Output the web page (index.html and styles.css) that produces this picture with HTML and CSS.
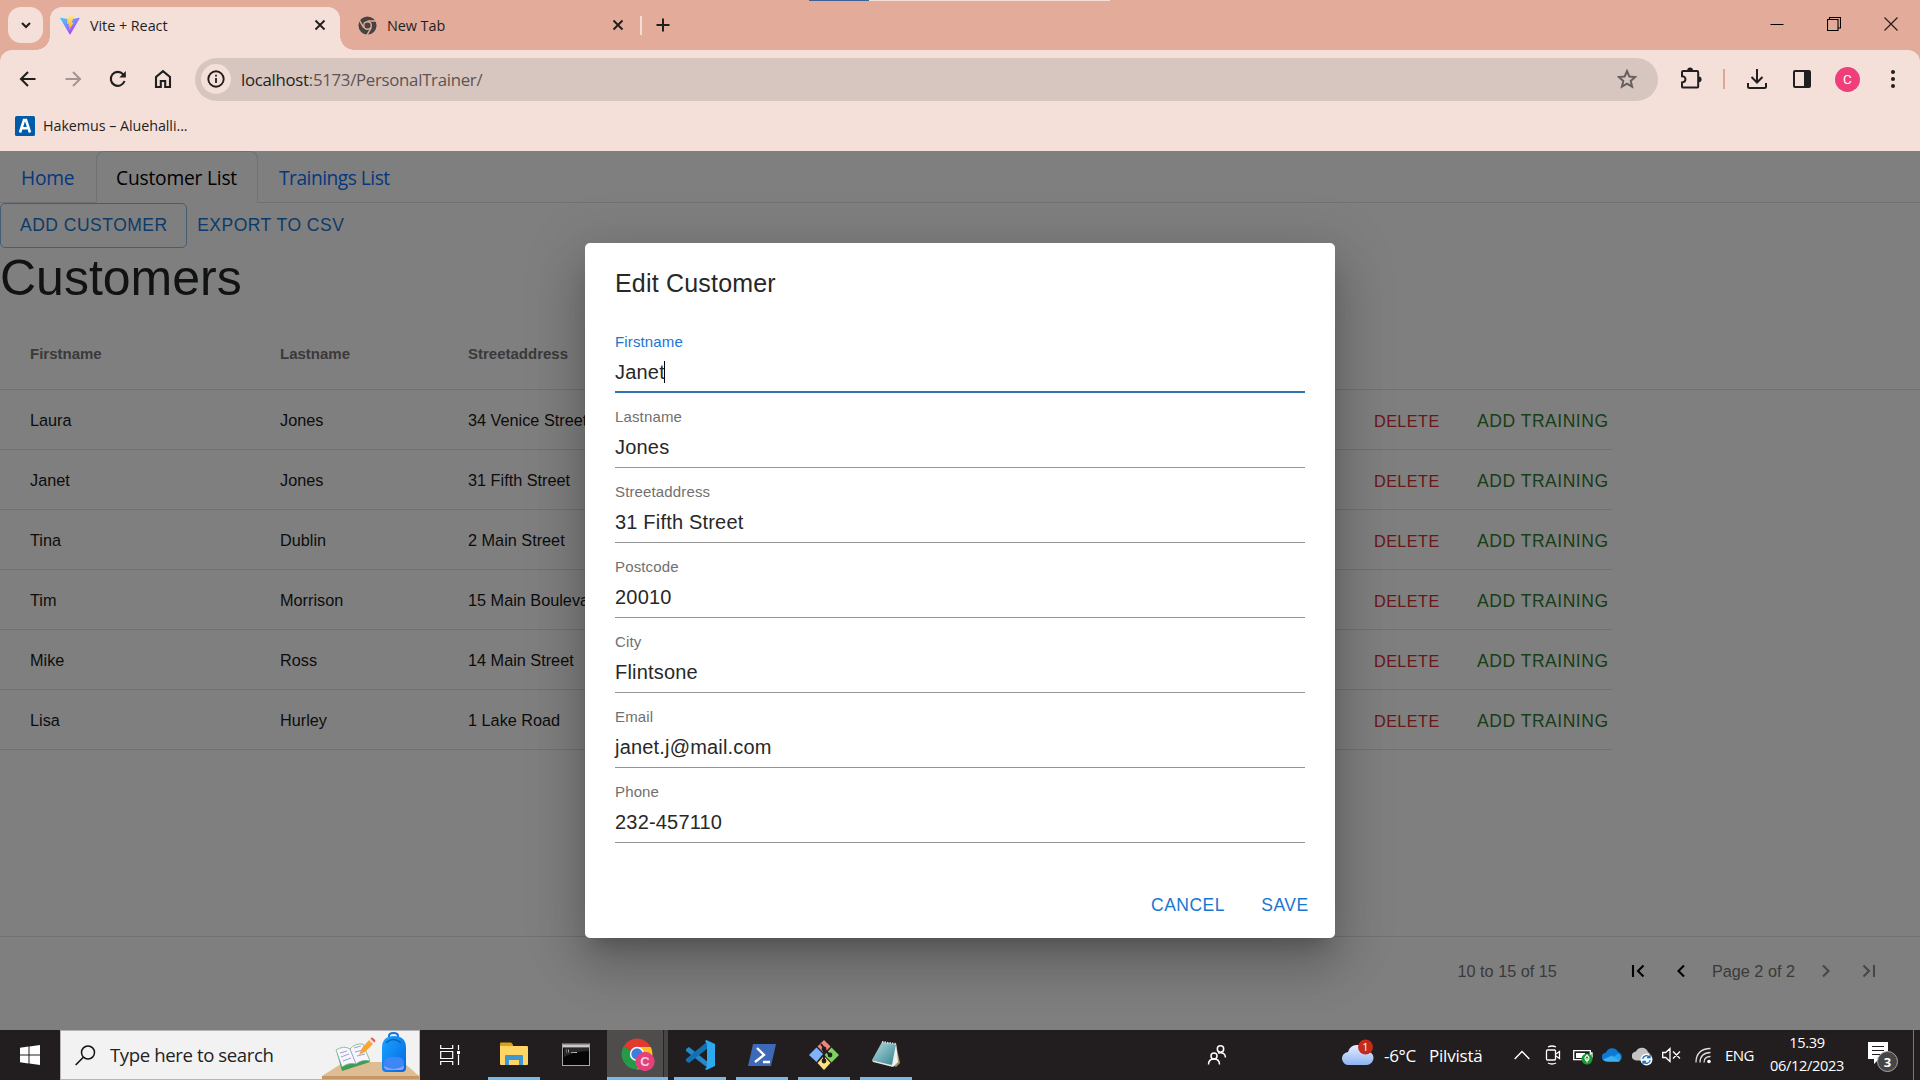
FILE: index.html
```html
<!DOCTYPE html>
<html lang="en">
<head>
<meta charset="utf-8">
<title>Vite + React</title>
<link rel="stylesheet" href="styles.css">
</head>
<body>
<div class="screen">
  <header class="browser">
    <div class="tabstrip">
      <div class="load-strip"><i></i></div>
      <button class="tab-search"><svg width="12" height="12" viewBox="0 0 12 12"><path d="M2 4l4 4 4-4" fill="none" stroke="#1f1f1f" stroke-width="2.1"/></svg></button>
      <div class="tab tab-active">
        <svg width="20" height="20" viewBox="0 0 32 32"><defs><linearGradient id="v1" x1="0" y1="0" x2=".7" y2="1"><stop offset="0" stop-color="#41d1ff"/><stop offset="1" stop-color="#bd34fe"/></linearGradient><linearGradient id="v2" x1="0" y1="0" x2="0" y2="1"><stop offset="0" stop-color="#ffea83"/><stop offset="1" stop-color="#ffa800"/></linearGradient></defs><path d="M31.300 5.700L16.700 30.800a.8.8 0 0 1-1.400 0L.4 5.700a.8.8 0 0 1 .9-1.200L16 7.100l14.500-2.600a.8.8 0 0 1 .8 1.200z" fill="url(#v1)"/><path d="M22.500 1L12 3.100l-.8 11.300 3.200-.7-.9 4.500 2-.6-1.500 7.200 8.200-13-3.400.6z" fill="url(#v2)"/></svg>
        <span class="tab-title">Vite + React</span>
        <svg class="x" width="12" height="12" viewBox="0 0 12 12"><path d="M1.500 1.500l9 9M10.500 1.500l-9 9" stroke="#1f1f1f" stroke-width="1.900"/></svg>
      </div>
      <div class="tab tab-idle">
        <svg width="19" height="19" viewBox="0 0 20 20"><circle cx="10" cy="10" r="9.500" fill="#474343"/><circle cx="10" cy="10" r="4.700" fill="#e3ab99"/><circle cx="10" cy="10" r="3.200" fill="#474343"/><path d="M10 5.300h9M6 12.300L1.500 4.500M14 12.300l-4.500 7.500" stroke="#e3ab99" stroke-width="1.500"/></svg>
        <span class="tab-title">New Tab</span>
        <svg class="x" width="12" height="12" viewBox="0 0 12 12"><path d="M1.500 1.500l9 9M10.500 1.500l-9 9" stroke="#1f1f1f" stroke-width="1.900"/></svg>
      </div>
      <i class="tab-sep"></i>
      <svg class="plus" width="14" height="14" viewBox="0 0 14 14"><path d="M7 .5v13M.5 7h13" stroke="#1f1f1f" stroke-width="2"/></svg>
      <div class="win-controls">
        <svg width="14" height="14" viewBox="0 0 14 14"><path d="M.5 7.500h13" stroke="#000" stroke-width="1"/></svg>
        <svg width="14" height="14" viewBox="0 0 14 14"><path d="M.5 2.500h10.500v11H.5zM2.500 2.500v-2h11v10.500h-2" fill="none" stroke="#000" stroke-width="1.100"/></svg>
        <svg width="14" height="14" viewBox="0 0 14 14"><path d="M.5.5l13 13M13.500.5l-13 13" stroke="#2b1a16" stroke-width="1.200"/></svg>
      </div>
    </div>
    <div class="toolbar">
      <div class="nav-icons">
        <svg width="20" height="20" viewBox="0 0 20 20"><path d="M17.500 10H3.500M10 3l-7 7 7 7" fill="none" stroke="#1f1f1f" stroke-width="2.100"/></svg>
        <svg width="20" height="20" viewBox="0 0 20 20"><path d="M2.500 10h14M10 3l7 7-7 7" fill="none" stroke="#a39692" stroke-width="2.100"/></svg>
        <svg width="20" height="20" viewBox="0 0 20 20"><path d="M16.500 12a7 7 0 1 1-1.300-6.600L17 7.300" fill="none" stroke="#1f1f1f" stroke-width="2.100"/><path d="M17.800 2v6.500h-6.500z" fill="#1f1f1f"/></svg>
        <svg width="20" height="20" viewBox="0 0 20 20"><path d="M3 18V8l7-5.800L17 8v10h-4.800v-6H7.800v6z" fill="none" stroke="#1f1f1f" stroke-width="2.100"/></svg>
      </div>
      <div class="omnibox">
        <span class="info"><svg width="18" height="18" viewBox="0 0 18 18"><circle cx="9" cy="9" r="7.700" fill="none" stroke="#1f1f1f" stroke-width="1.900"/><path d="M9 8v5M9 4.800v1.800" stroke="#1f1f1f" stroke-width="1.800"/></svg></span>
        <span class="url"><b>localhost</b>:5173/PersonalTrainer/</span>
        <svg class="star" width="20" height="20" viewBox="0 0 20 20"><path d="M10 2l2.300 5.500 6 .5-4.600 3.900 1.400 5.800L10 14.600l-5.100 3.100 1.400-5.800L1.700 8l6-.5z" fill="none" stroke="#66605e" stroke-width="2"/></svg>
      </div>
      <div class="tools">
        <svg class="t-ext" width="22" height="22" viewBox="0 0 22 22"><path d="M2 5.200q0-1.200 1.200-1.200H17q1.200 0 1.200 1.200v14.200q0 1.200-1.200 1.200H3.200Q2 20.600 2 19.400v-4c4.600 0 4.600-6.200 0-6.200z" fill="none" stroke="#1f1f1f" stroke-width="2"/><path d="M7.200 3.500a2.900 2.900 0 0 1 5.800 0zM18.700 9.400a2.900 2.900 0 0 1 0 5.800z" fill="#1f1f1f"/></svg>
        <i class="t-sep"></i>
        <svg width="22" height="22" viewBox="0 0 22 22"><path d="M11 1v13M5.500 9l5.500 5.500L16.500 9M2 15v3.500q0 1.500 1.500 1.500h15q1.500 0 1.500-1.500V15" fill="none" stroke="#1f1f1f" stroke-width="2"/></svg>
        <svg width="20" height="20" viewBox="0 0 20 20"><rect x="2" y="2" width="16" height="16" rx="1" fill="none" stroke="#1f1f1f" stroke-width="2"/><path d="M12 2h6v16h-6z" fill="#1f1f1f"/></svg>
        <span class="avatar">C</span>
        <svg width="20" height="20" viewBox="0 0 20 20"><g fill="#1f1f1f"><circle cx="10" cy="3" r="2"/><circle cx="10" cy="10" r="2"/><circle cx="10" cy="17" r="2"/></g></svg>
      </div>
    </div>
    <div class="bookmarks">
      <svg width="20" height="20" viewBox="0 0 20 20"><rect width="20" height="20" rx="1.500" fill="#005ba8"/><path d="M5 16.500L9 4h2l4 12.500M6.300 12.300h7.400" fill="none" stroke="#fff" stroke-width="2.600"/></svg>
      <span>Hakemus – Aluehalli...</span>
    </div>
  </header>

  <main class="page">
    <nav class="nav-tabs"><a>Home</a><a class="active">Customer List</a><a class="last">Trainings List</a></nav>
    <div class="actions"><button class="btn outlined">ADD CUSTOMER</button><button class="btn">EXPORT TO CSV</button></div>
    <h1>Customers</h1>
    <section class="grid">
      <div class="row head"><span>Firstname</span><span>Lastname</span><span>Streetaddress</span></div>
      <div class="row"><span>Laura</span><span>Jones</span><span>34 Venice Street</span><span class="del">DELETE</span><span class="add">ADD TRAINING</span></div>
      <div class="row"><span>Janet</span><span>Jones</span><span>31 Fifth Street</span><span class="del">DELETE</span><span class="add">ADD TRAINING</span></div>
      <div class="row"><span>Tina</span><span>Dublin</span><span>2 Main Street</span><span class="del">DELETE</span><span class="add">ADD TRAINING</span></div>
      <div class="row"><span>Tim</span><span>Morrison</span><span>15 Main Boulevard</span><span class="del">DELETE</span><span class="add">ADD TRAINING</span></div>
      <div class="row"><span>Mike</span><span>Ross</span><span>14 Main Street</span><span class="del">DELETE</span><span class="add">ADD TRAINING</span></div>
      <div class="row"><span>Lisa</span><span>Hurley</span><span>1 Lake Road</span><span class="del">DELETE</span><span class="add">ADD TRAINING</span></div>
    </section>
    <footer class="pager">
      <span class="summary">10 to 15 of 15</span>
      <svg class="p-first" width="14" height="14" viewBox="0 0 14 14"><path d="M2 1v12M12.500 1.500L7 7l5.500 5.500" fill="none" stroke="#000" stroke-width="2.100"/></svg>
      <svg class="p-prev" width="14" height="14" viewBox="0 0 14 14"><path d="M10 1.500L4.500 7l5.500 5.500" fill="none" stroke="#000" stroke-width="2.100"/></svg>
      <span class="page-no">Page 2 of 2</span>
      <svg class="p-next" width="14" height="14" viewBox="0 0 14 14"><path d="M4 1.500L9.500 7 4 12.500" fill="none" stroke="#8c8c8c" stroke-width="2.100"/></svg>
      <svg class="p-last" width="14" height="14" viewBox="0 0 14 14"><path d="M12 1v12M1.500 1.500L7 7l-5.500 5.500" fill="none" stroke="#8c8c8c" stroke-width="2.100"/></svg>
    </footer>
    <div class="backdrop">
      <form class="dialog">
        <h2>Edit Customer</h2>
        <div class="fields">
          <div class="field focused"><label>Firstname</label><p>Janet</p></div>
          <div class="field"><label>Lastname</label><p>Jones</p></div>
          <div class="field"><label>Streetaddress</label><p>31 Fifth Street</p></div>
          <div class="field"><label>Postcode</label><p>20010</p></div>
          <div class="field"><label>City</label><p>Flintsone</p></div>
          <div class="field"><label>Email</label><p>janet.j@mail.com</p></div>
          <div class="field"><label>Phone</label><p>232-457110</p></div>
        </div>
        <div class="dialog-actions"><button type="button" class="btn">CANCEL</button><button type="button" class="btn">SAVE</button></div>
      </form>
    </div>
  </main>

  <footer class="taskbar">
    <div class="start"><svg width="20" height="20" viewBox="0 0 20 20"><path d="M0 2.800L8.500 1.600v7.900H0zM9.500 1.500L20 0v9.500H9.500zM0 10.500h8.500v7.900L0 17.200zM9.500 10.500H20V20L9.500 18.500z" fill="#fff"/></svg></div>
    <div class="search">
      <svg width="21" height="21" viewBox="0 0 21 21"><circle cx="13" cy="7.500" r="6.500" fill="none" stroke="#111" stroke-width="1.500"/><path d="M8.300 12.200L.7 20" stroke="#111" stroke-width="1.600"/></svg>
      <span>Type here to search</span>
      <svg class="art" width="97" height="48" viewBox="0 0 97 48"><defs><linearGradient id="bp" x1="0" y1="0" x2="1" y2="1"><stop offset="0" stop-color="#19a5ff"/><stop offset="1" stop-color="#0567e0"/></linearGradient></defs><path d="M0 45l22-14h59l16 14z" fill="#dfbd94"/><path d="M0 45h97v3H0z" fill="#c69763"/><path d="M15 22l5 18 28-9-3-4z" fill="#3f9b56"/><path d="M14 19q8-5 14-1 5-6 13-5l7 17q-8-2-14 3-7-2-14 3z" fill="#f8f5ff" stroke="#5fae70" stroke-width=".7"/><path d="M28 18l6 15M18 22l7-2M19 26l8-3M21 30l8-3M32 17l7-2M33 21l8-2M35 25l8-2" stroke="#9da0c8" stroke-width="1"/><path d="M37 24l3-7 7-8 4 4-8 8z" fill="#f7a634"/><path d="M47 9l4 4 1.500-1.500-4-4z" fill="#dce5ed"/><path d="M48.500 7.500l4 4q2-2-1-4-2-2-3 0z" fill="#ef5350"/><path d="M67 7V5q0-3 4.500-3T76 5v3" fill="none" stroke="#1475df" stroke-width="2"/><path d="M60 17Q60 5 72 5T84 17v20q0 4-4 4H64q-4 0-4-4z" fill="url(#bp)"/><path d="M64 12q7-7 15 0" fill="none" stroke="#0761bd" stroke-width="1.300"/><path d="M62 32q0-6 7-6h6q7 0 7 6v4q-1 3-4 3H66q-4 0-4-3z" fill="#3c86f7"/><path d="M62 35q9 6 20 0v2q-1 2-3 2H66q-4-1-4-4z" fill="#a79bf5"/></svg>
    </div>
    <div class="apps">
      <div class="app taskview"><svg width="20" height="20" viewBox="0 0 20 20"><path d="M.7 0v3.500h12V0M.7 20v-3.500h12V20M.7 6.500h12v7H.7zM18.500 0v5M18.500 9.500V20" fill="none" stroke="#fff" stroke-width="1.200"/><path d="M17 6h3v3h-3z" fill="#fff"/></svg></div>
      <div class="app run"><svg width="30" height="30" viewBox="0 0 30 30"><path d="M1 3.500q0-1 1-1h10l2 2v3H1z" fill="#dda113"/><path d="M1 6h27q1 0 1 1v17q0 1-1 1H2q-1 0-1-1z" fill="#ffd566"/><path d="M6 25v-9q0-1 1-1h16q1 0 1 1v9h-4v-5H10v5z" fill="#3e97d1"/></svg></div>
      <div class="app"><svg width="30" height="30" viewBox="0 0 30 30"><rect x="1.500" y="4" width="27" height="21.500" fill="#060606" stroke="#a6a6a6"/><path d="M2 4.500h26v3H2z" fill="#c9c9c9"/><path d="M5 10h1M5 12h1M7.500 9.500v3M10 12.500h6" stroke="#ddd" stroke-width="1"/><path d="M3 17q10-6 25-6v-3H3z" fill="#555" opacity=".45"/></svg></div>
      <div class="app run current"><svg width="34" height="34" viewBox="0 0 34 34"><path d="M16 16L2.600 8.300A15.500 15.500 0 0 1 29.400 8.300z" fill="#e23b2e"/><path d="M16 16h-1L2.600 8.300A15.500 15.500 0 0 0 16 31.500l6-12z" fill="#259b49"/><path d="M16 9h13.800A15.500 15.500 0 0 1 16 31.500l7-13z" fill="#fbc31b"/><circle cx="16" cy="16" r="7.200" fill="#fff"/><circle cx="16" cy="16" r="5.700" fill="#3b7de0"/><circle cx="24" cy="23.500" r="9.700" fill="#e3417c"/><text x="24" y="28" text-anchor="middle" class="chrome-c">C</text></svg></div>
      <div class="app run"><svg width="32" height="32" viewBox="0 0 32 32"><path d="M2 10l3-2 20 16v6L2 12z" fill="#2489ca"/><path d="M2 22l3 2L24 9V2L2 20z" fill="#1071b3"/><path d="M22.500 1L31 5v22l-8.500 4-1.500-1 2-2V5l-2-3z" fill="#2ca9ef"/></svg></div>
      <div class="app run"><svg width="30" height="30" viewBox="0 0 30 30"><path d="M6 4h23l-5 22H1z" fill="#3d69b9"/><path d="M10 8l7 7-9 7M16 22h7" fill="none" stroke="#fff" stroke-width="2.300"/></svg></div>
      <div class="app run"><svg width="32" height="32" viewBox="0 0 32 32"><path d="M16 1l6.500 6.500L16 14 9.500 7.500z" fill="#f0857d"/><path d="M8.500 8.500L15 15l-6.500 8L1 16z" fill="#80b3ff"/><path d="M23.500 8.500L31 16l-7.500 7.500L16.500 16z" fill="#80d25b"/><path d="M16 17l6.500 7L16 31l-6.500-7z" fill="#ffe082"/><path d="M13 5l3 4v14M16 10l6 6" fill="none" stroke="#231f20" stroke-width="2"/><g fill="#231f20"><circle cx="16" cy="10" r="2.400"/><circle cx="22" cy="16" r="2.400"/><circle cx="16" cy="22" r="2.400"/></g></svg></div>
      <div class="app run"><svg width="30" height="30" viewBox="0 0 30 30"><defs><linearGradient id="np" x1="0" y1="0" x2="1" y2="1"><stop offset="0" stop-color="#b9dde0"/><stop offset="1" stop-color="#2f8490"/></linearGradient></defs><path d="M25 4l4 19-4 4-5-3z" fill="#a8966b"/><path d="M25 3l2 19-5 5-3-3z" fill="#eef2f2"/><path d="M11 2l14 2-4 21L1 20z" fill="url(#np)"/><path d="M1 20l20 5 1 2L2 22z" fill="#dfe9e9"/><path d="M11 2l14 2" stroke="#cfd7d9" stroke-width="2" stroke-dasharray="1.500 1"/></svg></div>
    </div>
    <div class="tray">
      <svg class="people" width="20" height="20" viewBox="0 0 20 20"><g fill="none" stroke="#fff" stroke-width="1.500"><circle cx="7" cy="11" r="3"/><path d="M1.500 19.500q0-5.500 5.500-5.500t5.500 5.500"/><circle cx="13.500" cy="4" r="3.200"/><path d="M11 8q7-1.500 7.500 4.500"/></g></svg>
      <div class="weather"><svg width="32" height="28" viewBox="0 0 32 28"><defs><linearGradient id="cl" x1="0" y1="0" x2="0" y2="1"><stop offset="0" stop-color="#e6efff"/><stop offset="1" stop-color="#8eb4f3"/></linearGradient></defs><path d="M7 26a6.500 6.500 0 0 1-1-13A9.500 9.500 0 0 1 24 12a7 7 0 0 1 1 14z" fill="url(#cl)"/><circle cx="23.500" cy="8" r="7.500" fill="#c42b1c"/><text x="23.500" y="12" text-anchor="middle" class="badge-no">1</text></svg><span class="temp">-6°C</span><span class="cond">Pilvistä</span></div>
      <svg class="chev" width="16" height="10" viewBox="0 0 16 10"><path d="M.7 9L8 1.500 15.300 9" fill="none" stroke="#fff" stroke-width="1.400"/></svg>
      <svg class="meet" width="16" height="20" viewBox="0 0 16 20"><g fill="none" stroke="#fff" stroke-width="1.300"><rect x="1.500" y="5" width="9" height="10" rx="1"/><path d="M11 9l3.500-2.500v7L11 11M3 2q4-2 8 0M3 18q4 2 8 0"/></g></svg>
      <svg class="batt" width="20" height="20" viewBox="0 0 20 20"><path d="M.7 5.700h16.600v9H.7zM18 8h1v4h-1" fill="none" stroke="#fff" stroke-width="1.300"/><path d="M3 8h9v5H3z" fill="#fff"/><circle cx="14" cy="14" r="5.500" fill="#169b31"/><path d="M14 10q-4 4 0 6 4-2 0-6zM14 13v4.500" fill="none" stroke="#fff" stroke-width="1.100"/></svg>
      <svg class="cloud" width="21" height="14" viewBox="0 0 21 14"><path d="M4.500 13.500a4.500 4.500 0 0 1-.5-9A6.500 6.500 0 0 1 16 4a5 5 0 0 1 .5 9.500z" fill="#0f78d1"/><path d="M6 13.500L16 5.500a4.500 4.500 0 0 1 .5 8z" fill="#29a0ea"/><path d="M4.500 13.500q-2 0-3.500-2l9-4 8 6z" fill="#3cb0f2"/></svg>
      <svg class="sync" width="21" height="19" viewBox="0 0 21 19"><path d="M4.500 13.500a4.500 4.500 0 0 1-.5-9A6.500 6.500 0 0 1 16 5a5 5 0 0 1 .5 8.500z" fill="#c3c3c3"/><circle cx="14.500" cy="12.500" r="6" fill="#f5f9fc"/><path d="M10.800 12a3.700 3.700 0 0 1 6.500-2M18.200 13a3.700 3.700 0 0 1-6.500 2M18 7.500v3h-3M11 17.500v-3h3" fill="none" stroke="#1770bd" stroke-width="1.300"/></svg>
      <svg class="speaker" width="19" height="16" viewBox="0 0 19 16"><path d="M.7 5.500h3L8 1.500v13l-4.300-4h-3zM11 4.500l7 7M18 4.500l-7 7" fill="none" stroke="#fff" stroke-width="1.300"/></svg>
      <svg class="wifi" width="17" height="17" viewBox="0 0 17 17"><g fill="none" stroke="#ddd" stroke-width="1.300"><path d="M1 15.500Q1 2 15.500 1.500M5 15.500Q5 6 15.500 5.500M9 15.500q0-6 6.500-6"/></g><circle cx="14" cy="14.500" r="1.800" fill="#fff"/></svg>
      <span class="lang">ENG</span>
      <div class="clock"><span>15.39</span><span>06/12/2023</span></div>
      <svg class="notif" width="32" height="32" viewBox="0 0 32 32"><path d="M1 1h20v17h-9l-5 5v-5H1z" fill="#fff"/><path d="M5 5.500h12M5 9.500h12M5 13.500h8" stroke="#221e1f" stroke-width="1.200"/><circle cx="20.500" cy="20.500" r="10" fill="#484546" stroke="#a8a8a8"/><text x="20.500" y="25.500" text-anchor="middle" class="notif-no">3</text></svg>
      <i class="desk"></i>
    </div>
  </footer>
</div>
</body>
</html>
```
FILE: styles.css
```css
* { box-sizing: border-box; }
body { margin: 0; overflow: hidden; font-family: "Liberation Sans", Arial, sans-serif; }
svg { display: block; flex: none; }
button { border: 0; background: none; padding: 0; margin: 0; }
h1, h2, p { margin: 0; font-weight: 400; }
.screen { width: 1920px; height: 1080px; display: flex; flex-direction: column; }

/* browser chrome */
.browser { flex: 0 0 151px; background: #e3ab99; font-family: "Open Sans", "Noto Sans", sans-serif; color: #1f1f1f; display: flex; flex-direction: column; }
.tabstrip { position: relative; height: 50px; display: flex; align-items: flex-start; padding: 7px 0 0 8px; }
.load-strip { position: absolute; top: 0; left: 809px; width: 301px; height: 1px; background: #f5e0d8; }
.load-strip i { display: block; width: 60px; height: 1px; background: #3f6296; }
.tab-search { width: 35px; height: 36px; border-radius: 13px; background: #f5e0d9; display: grid; place-items: center; margin-right: 7px; }
.tab { width: 290px; display: flex; align-items: center; height: 36px; font-size: 14.4px; }
.tab .x { margin-left: auto; }
.tab-title { margin-left: 10px; letter-spacing: -0.05px; }
.tab-active { position: relative; height: 43px; padding: 0 14px 7px 10px; background: #f5e0d9; border-radius: 12px 12px 0 0; }
.tab-active::before, .tab-active::after { content: ""; position: absolute; bottom: 0; width: 14px; height: 14px; }
.tab-active::before { left: -14px; background: radial-gradient(circle at 0 0, transparent 13.5px, #f5e0d9 14px); }
.tab-active::after { right: -14px; background: radial-gradient(circle at 100% 0, transparent 13.5px, #f5e0d9 14px); }
.tab-idle { padding: 0 6px 0 18px; }
.tab-sep { width: 2px; height: 19px; margin: 9px 14px 0 10px; background: #f5dcd4; }
.plus { margin-top: 11px; }
.win-controls { display: flex; gap: 43px; margin: 10px 22px 0 auto; }
.toolbar { height: 58px; background: #f5e0d9; border-radius: 12px 12px 0 0; display: flex; align-items: center; }
.nav-icons { display: flex; gap: 25px; width: 195px; padding-left: 18px; }
.omnibox { width: 1463px; height: 43px; border-radius: 22px; background: #d7c6c0; display: flex; align-items: center; padding: 0 21px 0 6px; }
.info { width: 30px; height: 30px; border-radius: 50%; background: #f5e0d9; display: grid; place-items: center; }
.url { margin-left: 10px; font-size: 16.8px; letter-spacing: -0.28px; color: #5c5451; }
.url b { font-weight: 400; color: #1f1f1f; }
.star { margin-left: auto; }
.tools { display: flex; align-items: center; padding-left: 22px; }
.t-sep { width: 2px; height: 20px; background: #dda797; margin: 0 22px 0 21px; }
.tools .t-sep + svg { margin-left: -1px; }
.tools svg + svg { margin-left: 24px; }
.t-ext { margin-top: -2px; }
.avatar { width: 25px; height: 25px; border-radius: 50%; background: #ee3f7b; color: #fff; font: 13.5px/25px Roboto, sans-serif; text-align: center; margin: 0 23px; }
.bookmarks { flex: 1; background: #f5e0d9; display: flex; align-items: flex-start; gap: 8px; padding: 8px 0 0 15px; font-size: 14.3px; letter-spacing: -0.05px; }
.bookmarks span { line-height: 20px; }

/* application page */
.page { position: relative; height: 879px; background: #fff; display: flex; flex-direction: column; overflow: hidden; }
.nav-tabs { flex: none; height: 52px; display: flex; border-bottom: 1px solid #dee2e6; font: 19.2px/54px "Open Sans", "Noto Sans", sans-serif; letter-spacing: -0.2px; color: #0d6efd; }
.nav-tabs a { height: 52px; width: 96px; padding-left: 21px; white-space: nowrap; }
.nav-tabs .active { width: 162px; padding-left: 19px; color: #000; background: #fff; border: 1px solid #dee2e6; border-bottom: 0; border-radius: 8px 8px 0 0; line-height: 52px; }
.nav-tabs .last { width: auto; letter-spacing: -0.5px; }
.btn { font: 17.5px/30px "Liberation Sans", Arial, sans-serif; letter-spacing: 0.5px; color: #1976d2; min-width: 80px; padding: 6px 10px 8px; }
.actions { flex: none; height: 45px; display: flex; }
.outlined { border: 1px solid #8cbae8; border-radius: 5px; padding: 5px 18.5px 7px 19px; }
h1 { flex: none; height: 71px; font-size: 50px; line-height: 60px; color: #212529; }
.row { display: grid; grid-template-columns: 250px 188px 906px 103px 136px; width: 1613px; height: 60px; align-items: center; padding: 2px 0 0 30px; border-bottom: 1px solid #e2e2e2; font-size: 16.25px; color: #181818; white-space: nowrap; }
.head { width: 1920px; height: 71px; padding-top: 0; padding-bottom: 2px; font-size: 15px; font-weight: 700; color: #757575; }
.del { color: #d32f2f; letter-spacing: 0.4px; padding-top: 2px; }
.add { color: #2e7d32; font-size: 17.5px; letter-spacing: 0.54px; padding-top: 2px; }
.pager { margin-top: auto; height: 94px; border-top: 1px solid #e2e2e2; padding-bottom: 25px; display: flex; align-items: center; justify-content: flex-end; font-size: 16.25px; color: #757575; padding-right: 44px; }
.p-first { margin-left: 74px; }
.p-prev { margin-left: 29px; }
.page-no { margin-left: 24px; }
.p-next { margin-left: 24px; }
.p-last { margin-left: 29px; }

/* modal */
.backdrop { position: absolute; inset: 0; background: rgba(0, 0, 0, 0.5); display: flex; justify-content: center; align-items: flex-start; padding-top: 92px; }
.dialog { width: 750px; height: 695px; background: #fff; border-radius: 5px; box-shadow: 0 14px 19px -9px rgba(0,0,0,.2), 0 30px 48px 4px rgba(0,0,0,.14), 0 11px 58px 10px rgba(0,0,0,.12); display: flex; flex-direction: column; }
.dialog h2 { height: 80px; padding: 20px 30px; font-size: 25px; line-height: 40px; letter-spacing: 0.19px; color: #282828; }
.fields { padding: 10px 30px 0; display: flex; flex-direction: column; gap: 15px; }
.field { height: 60px; border-bottom: 1px solid #949494; display: flex; flex-direction: column; }
.field label { font-size: 15px; line-height: 18px; letter-spacing: 0.14px; color: #707070; }
.field p { margin-top: 7px; font-size: 20px; line-height: 28px; color: #282828; letter-spacing: 0.19px; }
.focused { border-bottom: 2px solid #2f74b5; }
.focused label { color: #1976d2; }
.focused p::after { content: ""; display: inline-block; width: 1px; height: 22px; margin-left: -1px; background: #000; vertical-align: -4px; }
.dialog-actions { margin-top: auto; height: 65px; padding: 10px; display: flex; justify-content: flex-end; gap: 10px; }

/* taskbar */
.taskbar { height: 50px; background: #221e1f; color: #fff; display: flex; font-family: "Open Sans", "Noto Sans", sans-serif; }
.start { width: 60px; display: grid; place-items: center; }
.search { width: 360px; background: #f2f2f2; border: 1px solid #b5b5b5; display: flex; align-items: center; padding-left: 14px; color: #222; font-size: 18.6px; }
.search span { margin-left: 14px; padding-bottom: 2px; letter-spacing: -0.4px; }
.art { margin-left: auto; }
.apps { display: flex; flex: 0 0 502px; }
.app { flex: none; width: 52px; margin-right: 10px; display: grid; place-items: center; border-bottom: 3px solid transparent; }
.app svg { margin-top: 2px; }
.taskview { width: 60px; margin-right: 8px; }
.run { border-bottom-color: #76b9ed; }
.current { width: 61px; margin: 0 6px 0 -5px; background: linear-gradient(90deg, #4f4c4c 56px, #292526 56px, #292526 57px, #474444 57px); }
.chrome-c { font: 700 13px "Liberation Sans", sans-serif; fill: #f7cede; }
.tray { flex: 1; display: flex; align-items: center; padding-left: 285px; font-size: 17px; }
.weather { width: 152px; margin-left: 115px; display: flex; align-items: center; white-space: nowrap; }
.badge-no { font: 11px "Open Sans", sans-serif; fill: #fff; }
.weather svg { margin-top: -4px; }
.temp { width: 45px; margin-left: 10px; letter-spacing: -0.3px; }
.cond { letter-spacing: -0.2px; }
.chev { margin-left: 20px; }
.meet { margin-left: 15px; }
.batt { margin-left: 12px; }
.cloud { margin-left: 9px; }
.sync { margin-left: 9px; margin-top: 3px; }
.speaker { margin-left: 9px; }
.wifi { margin-left: 14px; }
.lang { margin-left: 13px; width: 34px; font-size: 15px; letter-spacing: -0.6px; }
.clock { width: 96px; text-align: center; font-size: 14.6px; line-height: 23px; letter-spacing: -0.35px; display: flex; flex-direction: column; padding-bottom: 2px; }
.notif { margin: 4px 14px 0 12px; }
.notif-no { font: 700 13px "Open Sans", sans-serif; fill: #fff; }
.desk { width: 1px; height: 50px; background: #777; }
```
